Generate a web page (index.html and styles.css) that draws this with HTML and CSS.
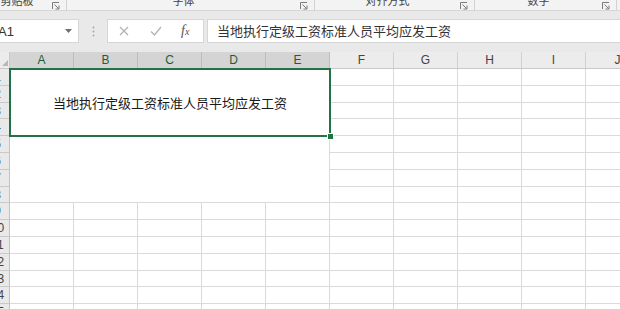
FILE: index.html
```html
<!DOCTYPE html>
<html lang="zh-CN">
<head>
  <meta charset="UTF-8" />
  <title>Sheet</title>
  <link rel="stylesheet" href="styles.css">
</head>
<body>
  <div class="ribbon">
    <div class="group g-clip">
      <span class="label">剪贴板</span>
      <span class="launcher"><svg width="8" height="8" viewBox="0 0 8 8"><path d="M0.5 7V0.5H7M2.5 2.5l4 4M7 3.5v3.5H3.5" fill="none" stroke="#7a7a7a" stroke-width="1"/></svg></span>
    </div>
    <div class="group g-font">
      <span class="label">字体</span>
      <span class="launcher"><svg width="8" height="8" viewBox="0 0 8 8"><path d="M0.5 7V0.5H7M2.5 2.5l4 4M7 3.5v3.5H3.5" fill="none" stroke="#7a7a7a" stroke-width="1"/></svg></span>
    </div>
    <div class="group g-align">
      <span class="label">对齐方式</span>
      <span class="launcher"><svg width="8" height="8" viewBox="0 0 8 8"><path d="M0.5 7V0.5H7M2.5 2.5l4 4M7 3.5v3.5H3.5" fill="none" stroke="#7a7a7a" stroke-width="1"/></svg></span>
    </div>
    <div class="group g-num">
      <span class="label">数字</span>
      <span class="launcher"><svg width="8" height="8" viewBox="0 0 8 8"><path d="M0.5 7V0.5H7M2.5 2.5l4 4M7 3.5v3.5H3.5" fill="none" stroke="#7a7a7a" stroke-width="1"/></svg></span>
    </div>
    <div class="group g-rest"></div>
  </div>

  <div class="fbar">
    <div class="namebox">
      <span>A1</span>
      <svg class="caret" width="7" height="4" viewBox="0 0 7 4"><path d="M0 0h7L3.5 4z" fill="#6f6f6f"/></svg>
    </div>
    <div class="grip">
      <svg width="3" height="11" viewBox="0 0 3 11"><circle cx="1.5" cy="1.5" r="0.9" fill="#a6a6a6"/><circle cx="1.5" cy="5.5" r="0.9" fill="#a6a6a6"/><circle cx="1.5" cy="9.5" r="0.9" fill="#a6a6a6"/></svg>
    </div>
    <div class="fx-box">
      <svg class="cancel" width="10" height="10" viewBox="0 0 10 10"><path d="M1 1l8 8M9 1l-8 8" stroke="#b3b3b3" stroke-width="1.3"/></svg>
      <svg class="enter" width="12" height="10" viewBox="0 0 12 10"><path d="M1 5.5l3.5 3.5L11 1" fill="none" stroke="#b3b3b3" stroke-width="1.3"/></svg>
      <span class="fx">f<small>x</small></span>
    </div>
    <div class="formula">当地执行定级工资标准人员平均应发工资</div>
  </div>

  <div class="sheet">
    <div class="col-heads">
      <div class="corner"><svg width="8" height="8" viewBox="0 0 8 8"><path d="M8 0V8H0z" fill="#b8b8b8"/></svg></div>
      <div class="col-head sel">A</div>
      <div class="col-head sel">B</div>
      <div class="col-head sel">C</div>
      <div class="col-head sel">D</div>
      <div class="col-head sel">E</div>
      <div class="col-head">F</div>
      <div class="col-head">G</div>
      <div class="col-head">H</div>
      <div class="col-head">I</div>
      <div class="col-head">J</div>
    </div>
    <div class="grid" id="grid">
      <div class="merge title">当地执行定级工资标准人员平均应发工资<span class="handle"></span></div>
      <div class="cell merge blank"></div>
    </div>
  </div>

  <script>
    const grid = document.getElementById('grid');

    for (let row = 1; row <= 15; row++) {
      const head = document.createElement('div');
      head.className = 'row-head';
      head.innerHTML = `<span>${row}</span>`;
      grid.appendChild(head);

      // rows 1-8 of A:E are covered by the two merged blocks
      const firstCol = row <= 8 ? 5 : 0;
      for (let col = firstCol; col < 10; col++) {
        const cell = document.createElement('div');
        cell.className = 'cell';
        grid.appendChild(cell);
      }
    }
  </script>
</body>
</html>
```

FILE: styles.css
```css
body {
  margin: 0;
  width: 620px;
  height: 309px;
  overflow: hidden;
  background-color: #fff;
  font-family: "Noto Sans CJK SC", "Liberation Sans", sans-serif;
}

/* ribbon group captions */
.ribbon {
  display: flex;
  height: 10px;
  background-color: #f3f3f3;
  border-bottom: 1px solid #d6d6d6;
  overflow: hidden;
}
.group {
  display: flex;
  border-right: 1px solid #d2d2d2;
  box-sizing: border-box;
}
.group .label {
  flex: 1;
  text-align: center;
  font-size: 11px;
  line-height: 12px;
  margin-top: -6px;
  color: #444;
}
.launcher {
  width: 14px;
  display: flex;
  align-items: center;
  justify-content: flex-start;
}
.launcher svg {
  margin-top: 1px;
}
.g-clip {
  width: 85px;
  margin-left: -18px;
}
.g-font {
  width: 248px;
}
.g-align {
  width: 160px;
}
.g-num {
  width: 142px;
}
.g-rest {
  flex: 1;
  border-right: none;
}

/* formula bar */
.fbar {
  display: flex;
  align-items: flex-start;
  height: 41px;
  padding-top: 8px;
  box-sizing: border-box;
  background-color: #e9e9e9;
}
.namebox {
  display: flex;
  align-items: center;
  justify-content: space-between;
  width: 99px;
  margin-left: -20px;
  height: 24px;
  padding: 0 6px 0 17px;
  box-sizing: border-box;
  background-color: #fff;
  border: 1px solid #d6d6d6;
  font-family: "Liberation Sans", sans-serif;
  font-size: 13px;
  color: #333;
}
.grip {
  width: 28px;
  height: 24px;
  display: flex;
  align-items: center;
  justify-content: center;
}
.fx-box {
  display: flex;
  align-items: center;
  width: 97px;
  height: 24px;
  margin-right: 3px;
  box-sizing: border-box;
  background-color: #fff;
  border: 1px solid #d6d6d6;
}
.fx-box .cancel {
  margin-left: 11px;
}
.fx-box .enter {
  margin-left: 21px;
}
.fx-box .fx {
  margin-left: 19px;
  font-family: "Liberation Serif", serif;
  font-style: italic;
  font-size: 14px;
  color: #555;
}
.fx-box .fx small {
  font-size: 10px;
}
.formula {
  flex: 1;
  height: 24px;
  box-sizing: border-box;
  padding-left: 9px;
  background-color: #fff;
  border: 1px solid #d6d6d6;
  border-right: none;
  font-size: 13px;
  line-height: 21px;
  color: #333;
  white-space: nowrap;
}

/* sheet */
.sheet {
  width: 650px;
}
.col-heads {
  display: flex;
  height: 17px;
  background-color: #ececec;
  border-bottom: 1px solid #c9c9c9;
  box-sizing: border-box;
}
.corner {
  width: 10px;
  border-right: 1px solid #c9c9c9;
  box-sizing: border-box;
  display: flex;
  align-items: flex-end;
  justify-content: flex-end;
  padding: 0 1px 2px 0;
}
.corner svg {
  width: 6px;
  height: 6px;
}
.col-head {
  width: 64px;
  border-right: 1px solid #d0d0d0;
  box-sizing: border-box;
  text-align: center;
  font-family: "Liberation Sans", sans-serif;
  font-size: 12px;
  line-height: 17px;
  color: #444;
}
.col-head.sel {
  background-color: #d4d4d4;
  color: #1f5c3a;
  border-right-color: #bdbdbd;
}

.grid {
  display: grid;
  grid-template-columns: 10px repeat(10, 64px);
  grid-template-rows: repeat(15, 16.8px);
}
.cell {
  border-right: 1px solid #dadada;
  border-bottom: 1px solid #dadada;
  box-sizing: border-box;
  background-color: #fff;
}
.row-head {
  overflow: hidden;
  background-color: #e9e9e9;
  border-right: 1px solid #c2c2c2;
  border-bottom: 1px solid #c9c9c9;
  box-sizing: border-box;
}
.row-head span {
  display: block;
  width: 25px;
  margin-left: -15px;
  text-align: center;
  font-family: "Liberation Sans", sans-serif;
  font-size: 12px;
  line-height: 16px;
  color: #444;
}

.merge.title {
  grid-column: 2 / 7;
  grid-row: 1 / 5;
  margin: -1px;
  position: relative;
  z-index: 2;
  display: flex;
  align-items: center;
  justify-content: center;
  border: 2px solid #217346;
  background-color: #fff;
  font-size: 13px;
  color: #1a1a1a;
  padding-bottom: 1px;
}
.handle {
  position: absolute;
  right: -5px;
  bottom: -5px;
  width: 5px;
  height: 5px;
  background-color: #217346;
  border: 1px solid #fff;
}
.merge.blank {
  grid-column: 2 / 7;
  grid-row: 5 / 9;
}
```
